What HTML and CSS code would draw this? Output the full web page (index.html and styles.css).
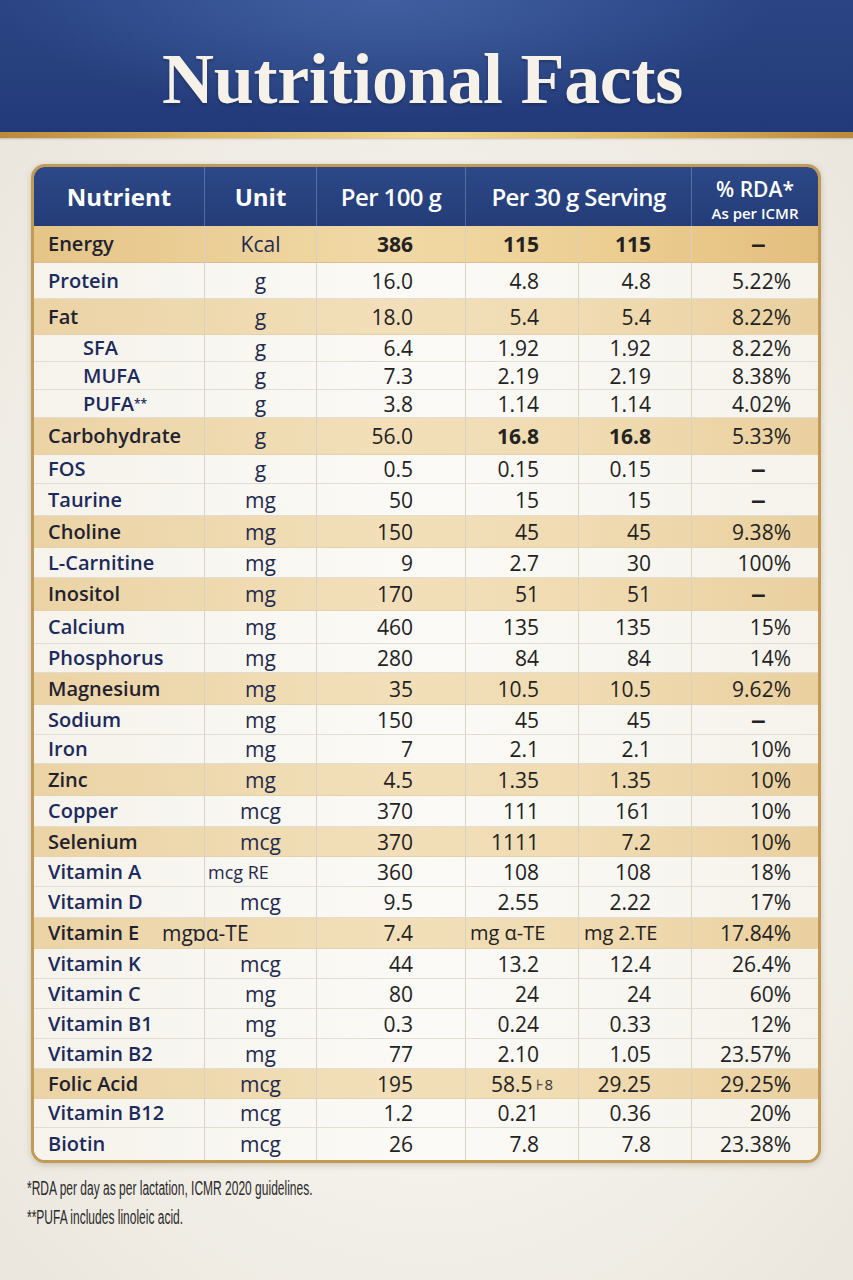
FILE: index.html
```html
<!DOCTYPE html>
<html lang="en">
<head>
<meta charset="utf-8">
<title>Nutritional Facts</title>
<link rel="stylesheet" href="styles.css">
</head>
<body>
<header class="banner">
  <h1 class="title">Nutritional Facts</h1>
</header>
<div class="gold-line"></div>

<section class="facts">
  <div class="row head">
    <div class="c">Nutrient</div>
    <div class="c">Unit</div>
    <div class="c narrow">Per 100 g</div>
    <div class="c span2 narrow">Per 30 g Serving</div>
    <div class="c rda"><span class="rda-main">% RDA*</span><span class="rda-sub">As per ICMR</span></div>
  </div>

  <div class="row energy h37"><div class="c n dark">Energy</div><div class="c u">Kcal</div><div class="c v3 b">386</div><div class="c v4 b">115</div><div class="c v5 b">115</div><div class="c v6 dash b"><span class="dash-glyph">–</span></div></div>
  <div class="row h36"><div class="c n">Protein</div><div class="c u">g</div><div class="c v3">16.0</div><div class="c v4">4.8</div><div class="c v5">4.8</div><div class="c v6">5.22%</div></div>
  <div class="row gold h36"><div class="c n dark">Fat</div><div class="c u">g</div><div class="c v3">18.0</div><div class="c v4">5.4</div><div class="c v5">5.4</div><div class="c v6">8.22%</div></div>
  <div class="row h27"><div class="c n sub">SFA</div><div class="c u">g</div><div class="c v3">6.4</div><div class="c v4">1.92</div><div class="c v5">1.92</div><div class="c v6">8.22%</div></div>
  <div class="row h28"><div class="c n sub">MUFA</div><div class="c u">g</div><div class="c v3">7.3</div><div class="c v4">2.19</div><div class="c v5">2.19</div><div class="c v6">8.38%</div></div>
  <div class="row h28"><div class="c n sub">PUFA<sup>**</sup></div><div class="c u">g</div><div class="c v3">3.8</div><div class="c v4">1.14</div><div class="c v5">1.14</div><div class="c v6">4.02%</div></div>
  <div class="row gold h37"><div class="c n dark">Carbohydrate</div><div class="c u">g</div><div class="c v3">56.0</div><div class="c v4 b">16.8</div><div class="c v5 b">16.8</div><div class="c v6">5.33%</div></div>
  <div class="row h29"><div class="c n">FOS</div><div class="c u">g</div><div class="c v3">0.5</div><div class="c v4">0.15</div><div class="c v5">0.15</div><div class="c v6 dash"><span class="dash-glyph">–</span></div></div>
  <div class="row h32"><div class="c n">Taurine</div><div class="c u">mg</div><div class="c v3">50</div><div class="c v4">15</div><div class="c v5">15</div><div class="c v6 dash"><span class="dash-glyph">–</span></div></div>
  <div class="row gold h32"><div class="c n dark">Choline</div><div class="c u">mg</div><div class="c v3">150</div><div class="c v4">45</div><div class="c v5">45</div><div class="c v6">9.38%</div></div>
  <div class="row h30"><div class="c n">L-Carnitine</div><div class="c u">mg</div><div class="c v3">9</div><div class="c v4">2.7</div><div class="c v5">30</div><div class="c v6">100%</div></div>
  <div class="row gold h33"><div class="c n dark">Inositol</div><div class="c u">mg</div><div class="c v3">170</div><div class="c v4">51</div><div class="c v5">51</div><div class="c v6 dash"><span class="dash-glyph">–</span></div></div>
  <div class="row h33"><div class="c n">Calcium</div><div class="c u">mg</div><div class="c v3">460</div><div class="c v4">135</div><div class="c v5">135</div><div class="c v6">15%</div></div>
  <div class="row h29"><div class="c n">Phosphorus</div><div class="c u">mg</div><div class="c v3">280</div><div class="c v4">84</div><div class="c v5">84</div><div class="c v6">14%</div></div>
  <div class="row gold h32"><div class="c n dark">Magnesium</div><div class="c u">mg</div><div class="c v3">35</div><div class="c v4">10.5</div><div class="c v5">10.5</div><div class="c v6">9.62%</div></div>
  <div class="row h30"><div class="c n">Sodium</div><div class="c u">mg</div><div class="c v3">150</div><div class="c v4">45</div><div class="c v5">45</div><div class="c v6 dash"><span class="dash-glyph">–</span></div></div>
  <div class="row h29"><div class="c n">Iron</div><div class="c u">mg</div><div class="c v3">7</div><div class="c v4">2.1</div><div class="c v5">2.1</div><div class="c v6">10%</div></div>
  <div class="row gold h32"><div class="c n dark">Zinc</div><div class="c u">mg</div><div class="c v3">4.5</div><div class="c v4">1.35</div><div class="c v5">1.35</div><div class="c v6">10%</div></div>
  <div class="row h31"><div class="c n">Copper</div><div class="c u">mcg</div><div class="c v3">370</div><div class="c v4">111</div><div class="c v5">161</div><div class="c v6">10%</div></div>
  <div class="row gold h30"><div class="c n dark">Selenium</div><div class="c u">mcg</div><div class="c v3">370</div><div class="c v4">1111</div><div class="c v5">7.2</div><div class="c v6">10%</div></div>
  <div class="row h30"><div class="c n">Vitamin A</div><div class="c u small">mcg RE</div><div class="c v3">360</div><div class="c v4">108</div><div class="c v5">108</div><div class="c v6">18%</div></div>
  <div class="row h31"><div class="c n">Vitamin D</div><div class="c u">mcg</div><div class="c v3">9.5</div><div class="c v4">2.55</div><div class="c v5">2.22</div><div class="c v6">17%</div></div>
  <div class="row gold h31"><div class="c n dark">Vitamin E</div><div class="c u spill"><span class="spill-text">mgɒα-TE</span></div><div class="c v3">7.4</div><div class="c v4 lefty">mg α-TE</div><div class="c v5 lefty">mg 2.TE</div><div class="c v6">17.84%</div></div>
  <div class="row h30"><div class="c n">Vitamin K</div><div class="c u">mcg</div><div class="c v3">44</div><div class="c v4">13.2</div><div class="c v5">12.4</div><div class="c v6">26.4%</div></div>
  <div class="row h30"><div class="c n">Vitamin C</div><div class="c u">mg</div><div class="c v3">80</div><div class="c v4">24</div><div class="c v5">24</div><div class="c v6">60%</div></div>
  <div class="row h30"><div class="c n">Vitamin B1</div><div class="c u">mg</div><div class="c v3">0.3</div><div class="c v4">0.24</div><div class="c v5">0.33</div><div class="c v6">12%</div></div>
  <div class="row h30"><div class="c n">Vitamin B2</div><div class="c u">mg</div><div class="c v3">77</div><div class="c v4">2.10</div><div class="c v5">1.05</div><div class="c v6">23.57%</div></div>
  <div class="row gold h30"><div class="c n dark">Folic Acid</div><div class="c u">mcg</div><div class="c v3">195</div><div class="c v4 wide">58.5<span class="odd">⊦8</span></div><div class="c v5">29.25</div><div class="c v6">29.25%</div></div>
  <div class="row h29"><div class="c n">Vitamin B12</div><div class="c u">mcg</div><div class="c v3">1.2</div><div class="c v4">0.21</div><div class="c v5">0.36</div><div class="c v6">20%</div></div>
  <div class="row last h32"><div class="c n">Biotin</div><div class="c u">mcg</div><div class="c v3">26</div><div class="c v4">7.8</div><div class="c v5">7.8</div><div class="c v6">23.38%</div></div>
</section>

<footer class="notes">
  <p class="note">*RDA per day as per lactation, ICMR 2020 guidelines.</p>
  <p class="note">**PUFA includes linoleic acid.</p>
</footer>
</body>
</html>
```

FILE: styles.css
```css
* { box-sizing: border-box; }

html, body {
  margin: 0;
  padding: 0;
}

body {
  width: 853px;
  min-height: 1280px;
  background: radial-gradient(ellipse 70% 60% at 50% 55%, #fcfbf7 0%, #f4f1ea 60%, #ebe7df 100%);
  font-family: "Open Sans", "Noto Sans", sans-serif;
  color: #222;
}

.banner {
  height: 132px;
  background:
    radial-gradient(ellipse 45% 90% at 45% 0%, rgba(72, 104, 170, 0.75) 0%, rgba(72, 104, 170, 0) 100%),
    linear-gradient(180deg, #2b4584 0%, #263f7d 60%, #22397a 100%);
  display: flex;
  justify-content: center;
  align-items: flex-start;
}

.title {
  margin: 0;
  padding-top: 38px;
  padding-right: 8px;
  font-family: "Liberation Serif", "DejaVu Serif", serif;
  font-weight: 700;
  font-size: 72px;
  line-height: 82px;
  color: #f6f2ea;
  letter-spacing: -0.3px;
  text-shadow: 0 2px 3px rgba(0, 0, 0, 0.25);
}

.gold-line {
  height: 6px;
  background: linear-gradient(90deg, #b88a3a 0%, #deb964 25%, #f4d890 50%, #deb964 75%, #b88a3a 100%);
  box-shadow: 0 1px 2px rgba(120, 90, 30, 0.3);
}

.facts {
  width: 790px;
  margin: 26px 0 0 31px;
  border: 3px solid #c29a56;
  border-radius: 14px;
  overflow: hidden;
  background: #faf8f3;
  box-shadow: 0 2px 6px rgba(90, 70, 30, 0.25), inset 0 0 0 1px rgba(255, 235, 190, 0.6);
}

.row {
  display: grid;
  grid-template-columns: 171px 112px 149px 113px 113px 126px;
  grid-template-rows: 100%;
  border-bottom: 1px solid #e2ddd2;
  background: linear-gradient(90deg, #f6f3ec 0%, #fbfaf6 50%, #f6f3ec 100%);
}

.row.last { border-bottom: none; }

.c {
  display: flex;
  align-items: center;
  border-right: 1px solid #d8d2c5;
  font-size: 21px;
  line-height: 22px;
  white-space: nowrap;
  min-width: 0;
}

.row > .c:last-child { border-right: none; }

.head {
  height: 59px;
  background: linear-gradient(180deg, #2c4886 0%, #243d79 100%);
  border-bottom: none;
}

.head .c {
  justify-content: center;
  color: #fff;
  font-weight: 700;
  font-size: 24px;
  line-height: 28px;
  border-right: 1px solid rgba(170, 190, 230, 0.35);
}

.head .narrow {
  font-weight: 600;
  letter-spacing: -0.6px;
}

.head .span2 { grid-column: span 2; }

.head .rda {
  flex-direction: column;
  justify-content: center;
  padding-top: 6px;
}

.rda-main {
  display: block;
  font-size: 21px;
  line-height: 27px;
  font-weight: 600;
}

.rda-sub {
  display: block;
  font-size: 15px;
  line-height: 21px;
  font-weight: 600;
}

.gold {
  background: linear-gradient(90deg, #ebd3a5 0%, #f2dfb9 45%, #f0dbb2 70%, #ead09f 100%);
  border-bottom-color: #e4d2ad;
}

.energy {
  background: linear-gradient(90deg, #e5c487 0%, #f1d9a6 45%, #eccd90 75%, #e3bf7f 100%);
  border-bottom-color: #d9bf8e;
}

.n {
  padding-left: 14px;
  font-weight: 600;
  font-size: 20px;
  color: #1c2a5c;
}

.n.dark { color: #1f222e; }

.n.sub { padding-left: 49px; }

.n sup {
  font-size: 12px;
  vertical-align: top;
  line-height: 1;
  margin-top: 1px;
}

.u {
  justify-content: center;
  color: #1f2a4e;
  font-size: 21px;
}

.u.small { justify-content: flex-start; padding-left: 3px; font-size: 18px; }

.u.spill { justify-content: flex-start; overflow: visible; }

.spill-text {
  margin-left: -43px;
  color: #1f222e;
  font-size: 21px;
}

.v3, .v4, .v5, .v6 {
  justify-content: flex-end;
  color: #222;
}

.v3 { padding-right: 52px; }
.v4 { padding-right: 39px; }
.v5 { padding-right: 40px; }
.v6 { padding-right: 27px; }

.v6.dash {
  padding-right: 55px;
  font-weight: 700;
}

.dash-glyph {
  display: inline-block;
  transform: scaleX(1.45);
}

.b { font-weight: 700; }

.lefty {
  justify-content: flex-start;
  padding-left: 4px;
  padding-right: 0;
  font-size: 20px;
}

.v5.lefty { padding-left: 5px; }

.v4.wide { padding-right: 25px; }

.odd {
  font-size: 15px;
  margin-left: 4px;
  color: #333;
}

.h27 { height: 27px; }
.h28 { height: 28px; }
.h29 { height: 29px; }
.h30 { height: 30px; }
.h31 { height: 31px; }
.h32 { height: 32px; }
.h33 { height: 33px; }
.h36 { height: 36px; }
.h37 { height: 37px; }

.notes {
  margin: 11px 0 0 27px;
}

.note {
  margin: 0;
  font-family: "Liberation Sans", "Arial", sans-serif;
  font-size: 20px;
  line-height: 29px;
  color: #2a2a2a;
  transform: scaleX(0.6);
  transform-origin: left center;
  white-space: nowrap;
}
```
